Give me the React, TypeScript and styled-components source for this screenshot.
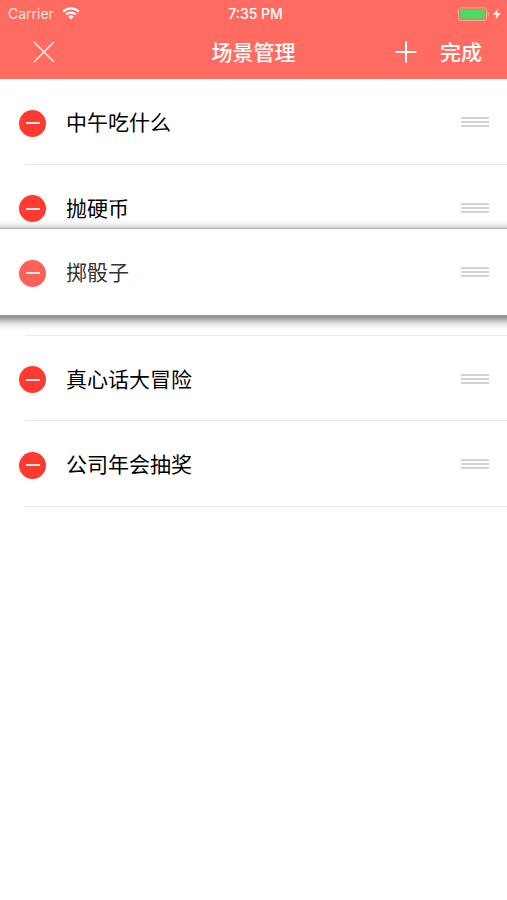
import React from "react";
import styled, { createGlobalStyle } from "styled-components";

const GlobalStyle = createGlobalStyle`
  * { box-sizing: border-box; }
  body {
    margin: 0;
    background: #fff;
    font-family: "Liberation Sans", "Noto Sans CJK SC", sans-serif;
  }
  button {
    display: flex;
    align-items: center;
    justify-content: center;
    margin: 0;
    padding: 0;
    border: 0;
    background: none;
    color: inherit;
    font: inherit;
    cursor: pointer;
  }
  svg { display: block; }
`;

const Header = styled.header`
  height: 79px;
  background: #ff6b60;
  color: #fff;
`;

const StatusBar = styled.div`
  display: grid;
  grid-template-columns: 1fr auto 1fr;
  align-items: center;
  height: 27px;
  padding: 0 4px 0 8px;
  font-family: Inter, "Liberation Sans", sans-serif;
  font-size: 14px;
  line-height: 16px;
`;

const Carrier = styled.div`
  display: flex;
  align-items: center;
  gap: 8px;
  color: #ffe1df;
`;

const Clock = styled.time`
  font-weight: 500;
`;

const Power = styled.div`
  display: flex;
  justify-content: flex-end;
`;

const NavBar = styled.nav`
  display: grid;
  grid-template-columns: 1fr auto 1fr;
  align-items: center;
  height: 50px;
  padding: 0 25px;
`;

const NavSide = styled.div<{ $end?: boolean }>`
  display: flex;
  align-items: center;
  justify-content: ${(p) => (p.$end ? "flex-end" : "flex-start")};
  gap: 22px;
  padding-left: 7px;
`;

const Title = styled.h1`
  margin: 0;
  padding-bottom: 2px;
  font-family: "Noto Sans CJK SC", sans-serif;
  font-size: 21px;
  line-height: 30px;
  font-weight: 500;
`;

const IconButton = styled.button`
  width: 24px;
  height: 24px;
`;

const DoneButton = styled.button`
  && {
    padding-bottom: 2px;
    font-family: "Noto Sans CJK SC", sans-serif;
    font-size: 21px;
    line-height: 30px;
    font-weight: 500;
  }
`;

const List = styled.ul`
  margin: 0;
  padding: 0;
  overflow-x: clip;
  list-style: none;
`;

const Slot = styled.li`
  position: relative;
  display: flex;
  height: 86px;
  &:nth-child(even) { height: 85px; }
  &::after {
    content: "";
    position: absolute;
    right: 0;
    bottom: 0;
    left: 25px;
    height: 1px;
    background: #e9e9e9;
  }
`;

const Row = styled.div<{ $lifted?: boolean }>`
  display: flex;
  flex: 1;
  align-items: center;
  gap: 20px;
  padding: 0 18px 0 19px;
  color: ${(p) => (p.$lifted ? "#333" : "#000")};
  ${(p) =>
    p.$lifted &&
    `
    position: absolute;
    z-index: 1;
    top: -22px;
    right: -16px;
    left: -16px;
    height: 88px;
    padding: 0 34px 0 35px;
    border-top: 1px solid #b4b4b4;
    border-bottom: 1px solid #999;
    background: #fff;
    box-shadow: 0 3px 10px rgba(0, 0, 0, 0.65);
  `}
`;

const RemoveButton = styled.button<{ $lifted?: boolean }>`
  && {
    flex: none;
    width: 27px;
    height: 27px;
    margin-top: 2px;
    border-radius: 50%;
    background: ${(p) => (p.$lifted ? "#ff6058" : "#ff3a30")};
  }
`;

const Minus = styled.span`
  width: 14px;
  height: 2px;
  background: #ffe9e7;
`;

const Label = styled.span`
  flex: 1;
  padding-bottom: 2px;
  font-family: "Noto Sans CJK SC", sans-serif;
  font-size: 21px;
  line-height: 30px;
`;

const Handle = styled.button`
  && {
    flex-direction: column;
    align-items: stretch;
    gap: 2px;
    width: 28px;
    cursor: grab;
  }
`;

const Grip = styled.span`
  height: 2px;
  background: #d2d2d4;
`;

const scenes = [
  { name: "中午吃什么" },
  { name: "抛硬币" },
  { name: "掷骰子", lifted: true },
  { name: "真心话大冒险" },
  { name: "公司年会抽奖" },
];

function WifiIcon() {
  return (
    <svg width="18" height="13" viewBox="0 0 18 13" fill="none" stroke="#fff" strokeWidth="2.2" aria-hidden="true">
      <path d="M1.2 4.6a11 11 0 0 1 15.6 0" />
      <path d="M4.1 7.6a6.9 6.9 0 0 1 9.8 0" />
      <path d="M9 12.4 6.3 9.7a3.8 3.8 0 0 1 5.4 0Z" fill="#fff" stroke="none" />
    </svg>
  );
}

function BatteryIcon() {
  return (
    <svg width="46" height="14" viewBox="0 0 46 14" aria-hidden="true">
      <rect x="1.5" y="0.8" width="28" height="12.6" rx="2.5" fill="none" stroke="#ffb088" />
      <rect x="3.3" y="2.4" width="24.4" height="9.4" rx="1" fill="#4cd964" />
      <path d="M30.8 5v4.2c1.8-.6 1.8-3.6 0-4.2Z" fill="#ffaaa2" />
      <path d="M41.4 1.4 36 7.7h3.6l-1.4 5.2 5.6-6.8h-3.7Z" fill="#fff" />
    </svg>
  );
}

function CloseIcon() {
  return (
    <svg width="24" height="24" viewBox="0 0 24 24" fill="none" stroke="#ffe9e7" strokeWidth="1.6" aria-hidden="true">
      <path d="m2 2 20 20M22 2 2 22" />
    </svg>
  );
}

function AddIcon() {
  return (
    <svg width="24" height="24" viewBox="0 0 24 24" fill="none" stroke="#fff" strokeWidth="2" aria-hidden="true">
      <path d="M12 1.5v21M1.5 12h21" />
    </svg>
  );
}

export default function App() {
  return (
    <>
      <GlobalStyle />
      <Header>
        <StatusBar>
          <Carrier>
            Carrier
            <WifiIcon />
          </Carrier>
          <Clock>7:35 PM</Clock>
          <Power>
            <BatteryIcon />
          </Power>
        </StatusBar>
        <NavBar>
          <NavSide>
            <IconButton type="button" aria-label="关闭">
              <CloseIcon />
            </IconButton>
          </NavSide>
          <Title>场景管理</Title>
          <NavSide $end>
            <IconButton type="button" aria-label="添加">
              <AddIcon />
            </IconButton>
            <DoneButton type="button">完成</DoneButton>
          </NavSide>
        </NavBar>
      </Header>
      <main>
        <List>
          {scenes.map(({ name, lifted }) => (
            <Slot key={name}>
              <Row $lifted={lifted}>
                <RemoveButton type="button" $lifted={lifted} aria-label={`删除 ${name}`}>
                  <Minus />
                </RemoveButton>
                <Label>{name}</Label>
                <Handle type="button" aria-label={`移动 ${name}`}>
                  <Grip />
                  <Grip />
                  <Grip />
                </Handle>
              </Row>
            </Slot>
          ))}
        </List>
      </main>
    </>
  );
}
